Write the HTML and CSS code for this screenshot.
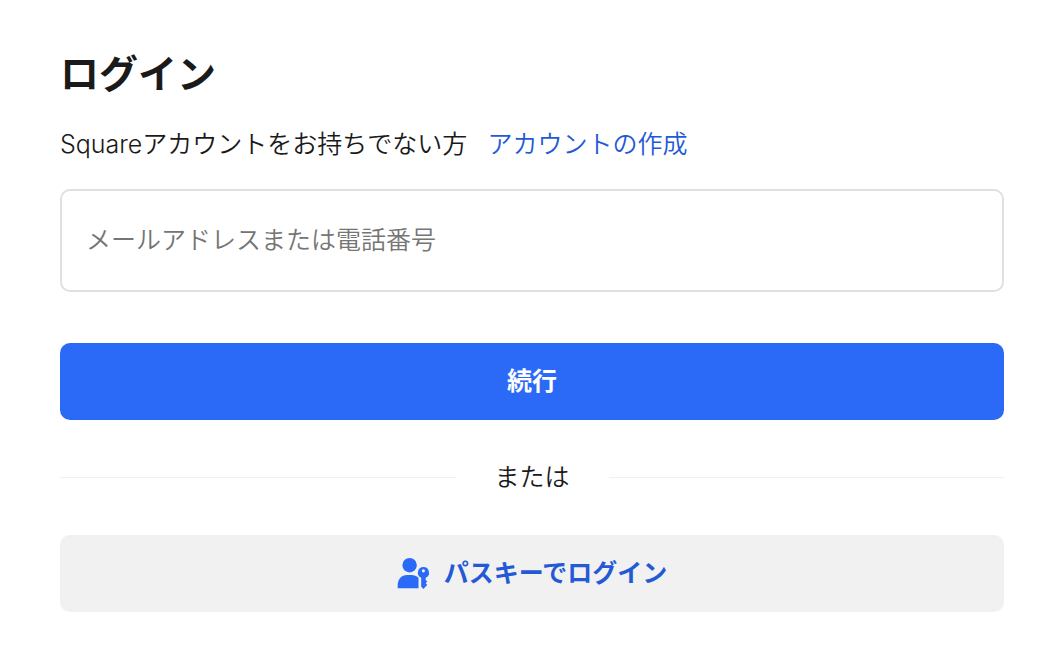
FILE: index.html
```
<!DOCTYPE html>
<html lang="ja">
  <head>
    <meta charset="UTF-8" />
    <meta name="viewport" content="width=device-width, initial-scale=1.0" />
    <title>ログイン</title>
    <link rel="stylesheet" href="styles.css">
  </head>
  <body>
    <main class="login">
      <h1>ログイン</h1>
      <p class="signup">
        <span>Squareアカウントをお持ちでない方</span>
        <a href="#">アカウントの作成</a>
      </p>
      <form class="loginForm">
        <input
          type="text"
          name="username"
          id="username"
          placeholder="メールアドレスまたは電話番号"
          aria-label="メールアドレスまたは電話番号"
        />
        <button type="submit" class="btn primary">続行</button>
        <div class="divider">または</div>
        <button type="button" class="btn secondary">
          <svg class="passkeyIcon" viewBox="0 0 33 33" aria-hidden="true">
            <circle cx="12.6" cy="8.2" r="7.2" />
            <path d="M.7 31.3V28C.7 22 4.700 18 10 18h4.500c2.700 0 5 1 7 2.800V31.300z" />
            <path fill-rule="evenodd" d="M26.400 10a5.600 5.600 0 0 1 2.300 10.700v2.300l1.600 1.500-1.600 1.700 1.600 1.700-1.600 1.700-2.200 2.300-2.300-2.200V20.700A5.600 5.600 0 0 1 26.400 10zM26.400 12.200a1.600 1.600 0 1 0 0 3.200 1.600 1.600 0 0 0 0-3.200z" />
          </svg>
          <span>パスキーでログイン</span>
        </button>
      </form>
    </main>
  </body>
</html>
```
FILE: styles.css
```
* {
  padding: 0;
  margin: 0;
  box-sizing: border-box;
}
body {
  background: #fff;
  color: #1a1a1a;
  font-family: Inter, "Noto Sans CJK JP", sans-serif;
  font-size: 25px;
  font-weight: 350;
  line-height: 38px;
}
.login {
  width: 100%;
  padding: 44px 58px 42px 60px;
}
h1 {
  font-size: 39px;
  font-weight: 700;
  line-height: 60px;
}
.signup {
  display: flex;
  flex-wrap: wrap;
  gap: 0 20px;
  margin-top: 21px;
}
.signup a {
  color: #2459d6;
  text-decoration: none;
}
.loginForm {
  display: flex;
  flex-direction: column;
  margin-top: 26px;
}
#username {
  width: 100%;
  padding: 30px 24px 31px;
  border: 2px solid #e0e0e0;
  border-radius: 10px;
  outline: none;
  background: #fff;
  color: inherit;
  font: inherit;
}
#username::placeholder {
  color: #757575;
  opacity: 1;
}
.btn {
  display: flex;
  align-items: center;
  justify-content: center;
  gap: 14px;
  width: 100%;
  padding: 19px 24px 20px;
  border: none;
  border-radius: 10px;
  font: inherit;
  font-weight: 700;
  cursor: pointer;
}
.primary {
  margin-top: 51px;
  background: #2b69f7;
  color: #fff;
}
.divider {
  display: flex;
  align-items: center;
  gap: 39px;
  margin: 38px 0 39px;
}
.divider::before,
.divider::after {
  content: "";
  flex: 1;
  height: 1px;
  background: #f0f0f0;
}
.secondary {
  background: #f1f1f1;
  color: #2459d6;
}
.passkeyIcon {
  width: 33px;
  height: 33px;
  fill: #2b69f7;
}
```
